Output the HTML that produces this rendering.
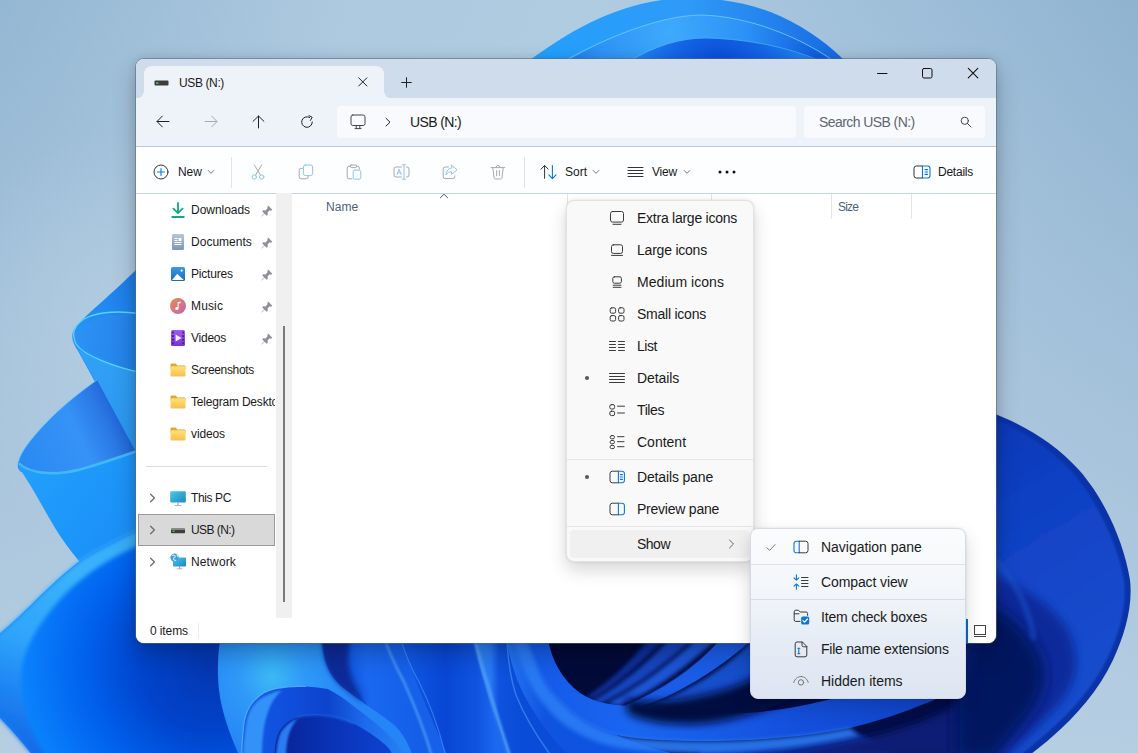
<!DOCTYPE html>
<html lang="en">
<head>
<meta charset="utf-8">
<title>USB (N:) - File Explorer</title>
<style>
*{box-sizing:border-box;margin:0;padding:0}
html,body{width:1138px;height:753px;overflow:hidden;background:#9fbfd8}
body{position:relative;font-family:"Liberation Sans","DejaVu Sans",sans-serif;font-size:12px;color:#1b1b1b}
#wall{position:absolute;left:0;top:0;width:1138px;height:753px;display:block}

.abs{position:absolute}
#shadow{position:absolute;left:136px;top:59px;width:860px;height:584px;border-radius:8px;box-shadow:0 10px 24px 0 rgba(0,0,0,.24),0 0 8px 1px rgba(0,0,0,.09)}
#win{position:absolute;left:136px;top:59px;width:860px;height:584px;border-radius:8px;overflow:hidden;background:#fff;outline:1px solid rgba(90,105,125,.55)}
#titlebar{position:absolute;left:0;top:0;width:860px;height:39px;background:#cfdcec}
#tab{position:absolute;left:8px;top:7px;width:240px;height:33px;background:#eef3f9;border-radius:8px 8px 0 0}
#tab:before,#tab:after{content:"";position:absolute;bottom:0;width:8px;height:8px}
#tab:before{left:-8px;background:radial-gradient(circle at 0 0,rgba(0,0,0,0) 7.5px,#eef3f9 8px)}
#tab:after{right:-8px;background:radial-gradient(circle at 100% 0,rgba(0,0,0,0) 7.5px,#eef3f9 8px)}
#addr{position:absolute;left:0;top:39px;width:860px;height:49px;background:#eef3f9;border-bottom:1px solid #b9c9de}
.box{position:absolute;top:8px;height:32px;background:#f8fafd;border-radius:4px}
#toolbar{position:absolute;left:0;top:88px;width:860px;height:47px;background:#fdfeff;border-bottom:1px solid #c7d3e4}
#main{position:absolute;left:0;top:135px;width:860px;height:424px;background:#fff}
#status{position:absolute;left:0;top:559px;width:860px;height:25px;background:#fff}
.t12{font-size:12px;line-height:16px;white-space:nowrap;color:#1a1a1a}
.t14{font-size:14px;line-height:18px;white-space:nowrap;color:#1a1a1a}
svg{display:block;overflow:visible}

#ui{position:absolute;left:0;top:0;width:1138px;height:753px}
#ui>*{position:absolute}
.ic{position:absolute}
.tx{position:absolute;white-space:nowrap;font-size:12px;line-height:16px;color:#1a1a1a}
.g{color:#5e6670}
.st{fill:none;stroke:#1f1f1f;stroke-width:1;stroke-linecap:round;stroke-linejoin:round}
.sg{fill:none;stroke:#a9a9a9;stroke-width:1;stroke-linecap:round;stroke-linejoin:round}
.sb{fill:none;stroke:#8fc4f0;stroke-width:1;stroke-linecap:round;stroke-linejoin:round}
.sB{fill:none;stroke:#0a78d4;stroke-width:1.1;stroke-linecap:round;stroke-linejoin:round}

.menu{position:absolute;border-radius:8px;border:1px solid #e2e2e2;background:#f9f9f9;box-shadow:0 8px 18px rgba(0,0,0,.16),0 0 3px rgba(0,0,0,.10)}
.mt{position:absolute;white-space:nowrap;font-size:14px;line-height:18px;color:#1a1a1a}
.sd{fill:none;stroke:#3a3a3a;stroke-width:1;stroke-linecap:round;stroke-linejoin:round}
</style>
</head>
<body>
<!--WALL-->
<svg id="wall" width="1138" height="753" viewBox="0 0 1138 753">
<defs>
<linearGradient id="bg" x1="0" y1="0" x2="1" y2="0">
<stop offset="0" stop-color="#94b7d3"/><stop offset=".3" stop-color="#adc9df"/><stop offset=".52" stop-color="#b0cce1"/><stop offset=".86" stop-color="#9abbd7"/><stop offset="1" stop-color="#8fb3d0"/>
</linearGradient>
<linearGradient id="bgv" x1="0" y1="0" x2="0" y2="1"><stop offset="0" stop-color="#b8cfe3" stop-opacity="0"/><stop offset=".45" stop-color="#b8cfe3" stop-opacity=".45"/><stop offset="1" stop-color="#b8cfe3" stop-opacity=".95"/></linearGradient>
<radialGradient id="bgl" cx="130" cy="330" r="200" gradientUnits="userSpaceOnUse"><stop offset="0" stop-color="#bad2e5" stop-opacity=".6"/><stop offset="1" stop-color="#bad2e5" stop-opacity="0"/></radialGradient>
<radialGradient id="bgbr" cx="1138" cy="753" r="330" gradientUnits="userSpaceOnUse"><stop offset="0" stop-color="#b9d1e4"/><stop offset="1" stop-color="#b9d1e4" stop-opacity="0"/></radialGradient>
<radialGradient id="bgbl" cx="0" cy="600" r="300" gradientUnits="userSpaceOnUse"><stop offset="0" stop-color="#bcd0e3"/><stop offset="1" stop-color="#bcd0e3" stop-opacity="0"/></radialGradient>
</defs>
<rect width="1138" height="753" fill="url(#bg)"/>
<rect width="1138" height="753" fill="url(#bgv)"/>
<rect width="1138" height="753" fill="url(#bgl)"/>

<defs>
<linearGradient id="tA" x1="529" y1="0" x2="844" y2="0" gradientUnits="userSpaceOnUse"><stop offset="0" stop-color="#23a0fd"/><stop offset=".5" stop-color="#2f9af7"/><stop offset=".75" stop-color="#2484ef"/><stop offset="1" stop-color="#1768e2"/></linearGradient>
<radialGradient id="tB" cx="670" cy="32" r="150" gradientUnits="userSpaceOnUse"><stop offset="0" stop-color="#3eaafc"/><stop offset=".5" stop-color="#2c92f6"/><stop offset="1" stop-color="#0f5ede"/></radialGradient>
<radialGradient id="tC" cx="720" cy="64" r="90" gradientUnits="userSpaceOnUse"><stop offset="0" stop-color="#0a4ed6"/><stop offset=".5" stop-color="#1466e6"/><stop offset="1" stop-color="#2088f4"/></radialGradient>
<filter id="b2"><feGaussianBlur stdDeviation="2"/></filter>
<filter id="b4"><feGaussianBlur stdDeviation="4"/></filter>
<filter id="b8"><feGaussianBlur stdDeviation="8"/></filter>
<filter id="b14"><feGaussianBlur stdDeviation="14"/></filter>
</defs>
<!-- top arch -->
<path d="M527,62 C560,38 600,12 650,2 C690,-6 740,-2 780,16 C810,30 830,46 846,62 Z" fill="url(#tA)"/>
<path d="M566,62 C610,36 660,16 700,15 C750,16 800,38 833,62 Z" fill="url(#tB)"/>
<path d="M566,60 C610,36 660,16 700,15 C750,16 800,38 831,59" fill="none" stroke="#6fcdf9" stroke-width="1" opacity=".8"/>
<path d="M629,62 C655,46 680,38 706,38 C750,39 790,48 820,62 Z" fill="url(#tC)"/>
<path d="M629,61 C655,46 680,38 706,38 C750,39 790,48 818,60" fill="none" stroke="#4fb0f5" stroke-width="1" opacity=".7"/>

<defs>
<linearGradient id="p1" x1="70" y1="330" x2="140" y2="300" gradientUnits="userSpaceOnUse"><stop offset="0" stop-color="#2796f7"/><stop offset="1" stop-color="#1c7ee8"/></linearGradient>
<linearGradient id="p1i" x1="75" y1="335" x2="140" y2="345" gradientUnits="userSpaceOnUse"><stop offset="0" stop-color="#2d92f5"/><stop offset="1" stop-color="#2280e8"/></linearGradient>
<linearGradient id="p1d" x1="80" y1="350" x2="140" y2="420" gradientUnits="userSpaceOnUse"><stop offset="0" stop-color="#31a2f6"/><stop offset="1" stop-color="#2c98f0"/></linearGradient>
<linearGradient id="p2i" x1="20" y1="460" x2="125" y2="410" gradientUnits="userSpaceOnUse"><stop offset="0" stop-color="#2a8af2"/><stop offset=".55" stop-color="#3692f6"/><stop offset=".8" stop-color="#2a78e4"/><stop offset="1" stop-color="#1a5cd0"/></linearGradient>
<linearGradient id="p2o" x1="20" y1="470" x2="140" y2="560" gradientUnits="userSpaceOnUse"><stop offset="0" stop-color="#22a0fd"/><stop offset=".5" stop-color="#1d96fa"/><stop offset="1" stop-color="#1a8cf6"/></linearGradient>
<linearGradient id="p3r" x1="20" y1="750" x2="110" y2="540" gradientUnits="userSpaceOnUse"><stop offset="0" stop-color="#1268e6"/><stop offset=".25" stop-color="#2088f4"/><stop offset=".45" stop-color="#2fa4fb"/><stop offset=".8" stop-color="#3bb2fb"/><stop offset="1" stop-color="#38aef8"/></linearGradient>
<radialGradient id="p3b" cx="210" cy="665" r="230" gradientUnits="userSpaceOnUse"><stop offset="0" stop-color="#0536b0"/><stop offset=".3" stop-color="#0044cc"/><stop offset=".55" stop-color="#0062ee"/><stop offset=".8" stop-color="#0a80fc"/><stop offset="1" stop-color="#1a90fc"/></radialGradient>
</defs>
<!-- base under window -->
<rect x="136" y="300" width="858" height="457" fill="url(#base)"/>
<!-- left petal 1 -->
<path d="M140,266 C118,288 92,310 77,325 C70,333 71,341 78,351 L95,382 L140,460 Z" fill="url(#p1)"/>
<path d="M74,333 C90,318 115,312 140,313 L140,373 C115,365 90,354 75,340 Z" fill="url(#p1i)"/>
<path d="M78,349 C95,360 118,368 140,373 L140,460 L96,382 Z" fill="url(#p1d)"/>
<path d="M140,313.500 C120,311 98,311 84,319 C74,326 71,333 76,344 C84,356 115,367 140,372.500" fill="none" stroke="#62d8fb" stroke-width="1.300" opacity=".9"/>
<!-- left petal 2 -->
<path d="M97,380 C80,392 60,408 45,424 C30,440 20,453 18,463 C17,468 19,470 21,472 L140,480 L136,452 Z" fill="url(#p2i)"/>
<path d="M18,464 C30,475 55,477 80,470 C100,465 120,458 140,450 L140,600 L100,580 C85,570 70,552 55,528 C42,506 30,483 19,468 Z" fill="url(#p2o)"/>
<path d="M18.500,463 C30,474 55,476 80,469.500 C100,464 120,457 140,450" fill="none" stroke="#45bcfb" stroke-width="2.400" opacity=".95"/>
<path d="M97,380 C80,392 60,408 45,424 C30,440 20,453 18.500,462" fill="none" stroke="#52c4f9" stroke-width="1" opacity=".8"/>
<!-- left petal 3 -->
<path d="M140,529 C115,541 92,552 77,563 C58,578 42,594 30,606 C15,620 5,630 -4,636 L-4,714 C10,728 22,742 34,757 L300,757 L300,600 L140,600 Z" fill="url(#p3b)"/>
<path d="M140,529 C115,541 92,552 77,563 C58,578 42,594 30,606 C15,620 5,630 -4,636 L-4,714 C10,728 22,742 34,757 L46,757 C30,730 20,700 21,675 C22,650 40,620 66,593 C90,570 115,555 140,545 Z" fill="url(#p3r)" filter="url(#b2)"/>

<defs>
<linearGradient id="base" x1="136" y1="0" x2="1000" y2="0" gradientUnits="userSpaceOnUse"><stop offset="0" stop-color="#0650dc"/><stop offset=".1" stop-color="#0644d0"/><stop offset=".3" stop-color="#1058e4"/><stop offset=".45" stop-color="#1460ea"/><stop offset=".6" stop-color="#0a2a9a"/><stop offset="1" stop-color="#071f80"/></linearGradient>
<radialGradient id="p4" cx="272" cy="676" r="80" gradientUnits="userSpaceOnUse"><stop offset="0" stop-color="#3cbaf5"/><stop offset=".4" stop-color="#2f9af8"/><stop offset="1" stop-color="#2585f6"/></radialGradient>
<linearGradient id="p4c" x1="250" y1="700" x2="405" y2="700" gradientUnits="userSpaceOnUse"><stop offset="0" stop-color="#1258e2"/><stop offset=".25" stop-color="#0f4edc"/><stop offset=".5" stop-color="#0c44cc"/><stop offset=".75" stop-color="#1c6cec"/><stop offset="1" stop-color="#2880f4"/></linearGradient>
<linearGradient id="p4d" x1="280" y1="700" x2="390" y2="700" gradientUnits="userSpaceOnUse"><stop offset="0" stop-color="#082498"/><stop offset=".5" stop-color="#0a34b8"/><stop offset="1" stop-color="#0c42d0"/></linearGradient>
<linearGradient id="rl" x1="996" y1="420" x2="1130" y2="640" gradientUnits="userSpaceOnUse"><stop offset="0" stop-color="#0c38b8"/><stop offset=".5" stop-color="#1244c8"/><stop offset="1" stop-color="#154ccc"/></linearGradient>
</defs>
<defs>
<linearGradient id="fA" x1="325" y1="0" x2="420" y2="0" gradientUnits="userSpaceOnUse"><stop offset="0" stop-color="#0c4cd8"/><stop offset=".45" stop-color="#1a68f0"/><stop offset="1" stop-color="#145ee8"/></linearGradient>
<linearGradient id="fB" x1="405" y1="0" x2="495" y2="0" gradientUnits="userSpaceOnUse"><stop offset="0" stop-color="#1058e4"/><stop offset=".45" stop-color="#0846d4"/><stop offset=".8" stop-color="#0f54e0"/><stop offset="1" stop-color="#1c68f0"/></linearGradient>
<filter id="b1"><feGaussianBlur stdDeviation="0.8"/></filter>
<linearGradient id="f1" x1="330" y1="0" x2="480" y2="0" gradientUnits="userSpaceOnUse"><stop offset="0" stop-color="#1d64e4"/><stop offset=".4" stop-color="#1558dc"/><stop offset=".75" stop-color="#0f4cd2"/><stop offset="1" stop-color="#2070ea"/></linearGradient>
<linearGradient id="f2" x1="478" y1="0" x2="520" y2="0" gradientUnits="userSpaceOnUse"><stop offset="0" stop-color="#2c82f6"/><stop offset=".3" stop-color="#2878f4"/><stop offset=".5" stop-color="#0e52de"/><stop offset="1" stop-color="#0a4cd8"/></linearGradient>
<linearGradient id="f3" x1="508" y1="0" x2="545" y2="0" gradientUnits="userSpaceOnUse"><stop offset="0" stop-color="#2474f2"/><stop offset="1" stop-color="#0f54e0"/></linearGradient>
<linearGradient id="f4" x1="540" y1="0" x2="1000" y2="0" gradientUnits="userSpaceOnUse"><stop offset="0" stop-color="#145ae8"/><stop offset=".2" stop-color="#1a66f0"/><stop offset=".55" stop-color="#1450dc"/><stop offset="1" stop-color="#0e3ec0"/></linearGradient>
<linearGradient id="st" x1="600" y1="700" x2="760" y2="640" gradientUnits="userSpaceOnUse"><stop offset="0" stop-color="#1a58d8"/><stop offset="1" stop-color="#1040b8"/></linearGradient>
</defs>
<!-- bottom: folds -->
<path d="M540,640 L1000,640 L1000,757 L600,757 Z" fill="#030d46"/>
<path d="M320,640 L392,640 C400,672 415,715 436,757 L405,757 Z" fill="url(#fA)"/>
<path d="M320,640 L345,640 C345,660 350,680 365,700 L340,690 Z" fill="#0a2c98" filter="url(#b4)" opacity=".8"/>
<path d="M399,640 L480,640 C488,680 498,720 512,757 L446,757 C432,722 412,682 399,640 Z" fill="url(#fB)"/>
<path d="M386,640 L402,640 C414,682 434,722 448,757 L431,757 C420,722 400,682 386,640 Z" fill="#1660ea"/>
<path d="M385,640 C392,660 398,670 404,682 C412,700 423,724 432,757" fill="none" stroke="#4a9af6" stroke-width="2.200" filter="url(#b1)"/>
<path d="M401,640 C406,656 412,670 419,682 C428,700 438,724 446,757" fill="none" stroke="#3a86f0" stroke-width="1.200" opacity=".8"/>
<path d="M474,640 L509,640 C512,665 520,690 536,715 C548,733 560,747 572,757 L508,757 C494,720 483,680 474,640 Z" fill="url(#f2)"/>
<path d="M475,640 C480,660 483,672 487,682 C492,700 499,724 510,757" fill="none" stroke="#4a98f6" stroke-width="3.500" filter="url(#b1)"/>
<path d="M507,640 L528,640 C534,665 545,685 560,700 C590,728 640,748 690,757 L571,757 C555,742 540,722 528,702 C517,683 510,662 507,640 Z" fill="url(#f3)"/>
<path d="M507,640 C508,660 511,680 516,695 C524,715 538,738 552,757" fill="none" stroke="#3a86f2" stroke-width="1.500" opacity=".8"/>
<path d="M546,640 L800,640 L760,700 C720,705 680,706 650,700 C625,706 600,706 580,692 C562,678 550,660 546,640 Z" fill="#020a38"/>
<!-- streaks -->
<path d="M648,640 L664,640 C640,665 612,688 592,699 L586,697 C610,682 632,660 648,640 Z" fill="#0c2f9a" filter="url(#b2)"/>
<path d="M668,640 L692,640 C664,666 628,692 600,704 L592,701 C622,684 648,662 668,640 Z" fill="#1444c0" filter="url(#b2)"/>
<path d="M695,640 L716,640 C688,666 650,694 620,706 L606,704 C640,686 670,664 695,640 Z" fill="#1a55d8" filter="url(#b2)"/>
<path d="M719,640 L752,640 C720,668 676,697 636,708 L622,706 C662,690 696,666 719,640 Z" fill="#1a5ce6"/>
<path d="M752,640 L870,640 C820,668 760,690 700,705 L640,708 C690,692 730,665 752,640 Z" fill="#184fcc" filter="url(#b2)"/>
<path d="M719,640 C696,666 662,690 622,706" fill="none" stroke="#071a6a" stroke-width="1.5" opacity=".8"/>
<!-- band under dark -->
<path d="M526,640 L548,640 C552,660 562,680 580,693 C598,705 622,707 650,706 C700,716 750,716 800,706 C860,694 930,672 985,640 L1000,640 L1000,665 C960,692 900,716 850,728 C800,738 740,742 690,741 C650,740 625,738 610,733 C590,726 575,716 565,706 C550,692 542,680 538,668 Z" fill="url(#f4)"/>
<path d="M625,698 C660,706 700,698 735,686 C752,679 765,672 778,665 L796,696 C765,712 730,722 700,724 C672,726 645,722 628,714 Z" fill="#020b40" filter="url(#b4)"/>
<path d="M700,748 C760,750 810,744 860,734 L900,757 L700,757 Z" fill="#0b32a6" filter="url(#b2)"/>
<!-- light band under f4 -->
<path d="M526,640 L538,668 C542,680 550,692 565,706 C575,716 590,726 610,733 C625,738 650,740 690,741 C740,742 800,738 850,728 L860,736 C800,750 740,754 690,753 C650,752 620,750 598,742 C575,734 558,722 545,706 C530,688 520,664 514,640 Z" fill="#2a7cf6" filter="url(#b2)" opacity=".9"/>
<path d="M700,757 C780,757 860,744 920,722 C950,710 980,692 1000,675 L1000,757 Z" fill="#071c74" filter="url(#b4)"/>
<!-- petal 4 -->
<path d="M220,640 L322,640 C323,655 326,672 340,685 C355,698 375,710 393,724 C402,732 408,742 413,757 L240,757 C232,740 222,715 219,690 C217,670 218,655 220,640 Z" fill="url(#p4)"/>
<path d="M322,640 L350,640 C345,660 345,680 365,704 L340,685 C326,672 323,655 322,640 Z" fill="#0a2a98" filter="url(#b2)"/>
<path d="M241.600,757 C242,740 243,730 244.500,720 C247,710 250,704 256,699 C262,693 268,690 277,688.400 C287,686.500 296,686 306,686.500 C314,687 321,688 327.600,689 C338,694 346,700 354.600,707 C365,715 375,722 383.600,730 C392,738 399,745 405,757 Z" fill="url(#p4c)"/>
<path d="M243,757 C244,740 245,730 247,720 C249,711 253,705 258,700.500 C264,696 272,692 282,690.500 C270,700 262,720 262,757 Z" fill="#3092f8" filter="url(#b1)"/>
<path d="M241.600,757 C242,740 243,730 244.500,720 C247,710 250,704 256,699 C262,693 268,690 277,688.400 C287,686.500 296,686 306,686.500" fill="none" stroke="#58b8f8" stroke-width="1.200" opacity=".8"/>
<path d="M274.400,757 C275,745 276,738 279,732 C283,725 289,720 296.600,717.400 C306,715 316,714.500 325.600,715.500 C336,717 346,720 354.600,724 C366,730 376,737 383.600,743.500 C388,747 391,750 393,757 Z" fill="url(#p4d)"/>
<path d="M276,757 C277,745 278,738 281,732 C285,726 291,721 298,718.500 C290,726 286,740 286,757 Z" fill="#2a7cf0" filter="url(#b1)"/>
<path d="M296.600,717.400 C306,715 316,714.500 325.600,715.500 C336,717 346,720 354.600,724" fill="none" stroke="#2a70e8" stroke-width="1.500" opacity=".7" filter="url(#b1)"/>
<!-- right lobe -->
<path d="M990,412 C1022,424 1054,442 1079,470 C1104,498 1124,542 1130,580 C1133,606 1125,634 1113,660 C1099,690 1076,716 1053,736 C1043,745 1035,751 1027,757 L990,757 Z" fill="#0b33a8"/>
<path d="M990,417 C1020,429 1050,447 1074,474 C1098,503 1118,545 1124,580 C1127,605 1120,632 1108,657 C1094,686 1072,711 1049,731 C1039,740 1028,749 1018,757 L990,757 Z" fill="url(#rl)" filter="url(#b1)"/>
<path d="M975,570 C1010,578 1050,600 1068,630 C1080,655 1078,680 1062,700 C1045,722 1020,742 1000,760 L960,760 L960,680 Z" fill="#0a2c9c" filter="url(#b4)"/>
<path d="M985,605 C1010,612 1032,635 1042,660 C1048,682 1040,704 1022,724 C1012,736 1002,748 994,760 L955,760 L955,690 Z" fill="#04145e" filter="url(#b8)"/>
<path d="M996,560 C1015,580 1030,610 1034,640" fill="none" stroke="#1d52cc" stroke-width="5" opacity=".6" filter="url(#b2)"/>

</svg>
<!--/WALL-->
<div id="shadow"></div>
<div id="win">
<div id="titlebar"><div id="tab"></div></div>
<div id="addr"><div class="box" style="left:201px;width:459px"></div><div class="box" style="left:668px;width:181px"></div></div>
<div id="toolbar"></div>
<div id="main"></div>
<div id="status"></div>
</div>


<div id="ui">
<!-- tab -->
<svg class="ic" style="left:154px;top:79px" width="15" height="8" viewBox="0 0 15 8"><rect x="0.5" y="1.5" width="14" height="5" rx="1" fill="#3c3c3c"/><rect x="2" y="3.5" width="2.5" height="1.2" fill="#5be36a"/></svg>
<div class="tx" style="left:179px;top:75px;letter-spacing:-0.38px">USB (N:)</div>
<svg class="ic" style="left:357px;top:76px" width="12" height="12" viewBox="0 0 12 12"><path class="st" d="M1.700,1.800 L9.900,10 M9.900,1.800 L1.700,10"/></svg>
<svg class="ic" style="left:400px;top:76px" width="13" height="13" viewBox="0 0 13 13"><path class="st" d="M6.500,1.700 V11.300 M1.700,6.500 H11.300"/></svg>
<!-- caption buttons -->
<svg class="ic" style="left:877px;top:67px" width="11" height="12" viewBox="0 0 11 12"><path class="st" style="stroke:#111" d="M0.500,6.500 H10"/></svg>
<svg class="ic" style="left:921px;top:67px" width="13" height="13" viewBox="0 0 13 13"><rect class="st" style="stroke:#111" x="1.500" y="1.500" width="9.500" height="9.500" rx="1.500"/></svg>
<svg class="ic" style="left:967px;top:67px" width="12" height="12" viewBox="0 0 12 12"><path class="st" style="stroke:#111;stroke-width:1.100" d="M1.300,1.300 L10.800,10.800 M10.800,1.300 L1.300,10.800"/></svg>
<!-- nav buttons -->
<svg class="ic" style="left:156px;top:115px" width="14" height="14" viewBox="0 0 14 14"><path class="st" d="M13,6.500 H1.200 M6.300,1.100 L1,6.500 L6.300,11.900"/></svg>
<svg class="ic" style="left:204px;top:115px" width="14" height="14" viewBox="0 0 14 14"><path class="sg" d="M1,6.500 H12.800 M7.700,1.100 L13,6.500 L7.700,11.900"/></svg>
<svg class="ic" style="left:252px;top:115px" width="14" height="14" viewBox="0 0 14 14"><path class="st" d="M6.500,13 V1.200 M1.100,6.300 L6.500,1 L11.900,6.300"/></svg>
<svg class="ic" style="left:300px;top:115px" width="14" height="14" viewBox="0 0 14 14"><path class="st" d="M12.3,7 A5.3,5.3 0 1 1 9.6,2.4 M9,0.6 L12.2,2.3 L10.4,5.4" /></svg>
<!-- address -->
<svg class="ic" style="left:350px;top:114px" width="16" height="16" viewBox="0 0 16 16"><rect class="st" x="1" y="1" width="14" height="10.5" rx="1.8" style="stroke:#444"/><path d="M5,14.6 H11 M6.2,12 V14.4 M9.8,12 V14.4" class="st" style="stroke:#444"/></svg>
<svg class="ic" style="left:384px;top:116px" width="8" height="12" viewBox="0 0 8 12"><path class="st" d="M2,2.300 L6,6.200 L2,10.100"/></svg>
<div class="tx" style="left:410px;top:113px;font-size:14px;line-height:18px;letter-spacing:-0.62px">USB (N:)</div>
<div class="tx g" style="left:819px;top:113px;font-size:14px;line-height:18px;letter-spacing:-0.58px">Search USB (N:)</div>
<svg class="ic" style="left:960px;top:116px" width="12" height="12" viewBox="0 0 12 12"><circle class="st" cx="4.8" cy="4.8" r="3.6" style="stroke:#444"/><path class="st" d="M7.5,7.5 L11,11" style="stroke:#444"/></svg>
<!-- toolbar -->
<svg class="ic" style="left:153px;top:164px" width="16" height="16" viewBox="0 0 16 16"><circle class="st" cx="8" cy="8" r="7" style="stroke:#333"/><path class="sB" d="M8,4.6 V11.4 M4.6,8 H11.4"/></svg>
<div class="tx" style="left:178px;top:164px;letter-spacing:-0.10px">New</div>
<svg class="ic" style="left:207px;top:169px" width="8" height="6" viewBox="0 0 8 6"><path class="st" style="stroke:#777" d="M1.2,1.5 L4,4.3 L6.8,1.5"/></svg>
<div style="left:231px;top:157px;width:1px;height:31px;background:#e3e3e3"></div>
<svg class="ic" style="left:250px;top:164px" width="16" height="16" viewBox="0 0 16 16"><path class="sg" d="M4.2,0.8 L10.6,11.4 M11.8,0.8 L5.4,11.4"/><circle class="sb" cx="4.3" cy="13" r="2.2"/><circle class="sb" cx="11.7" cy="13" r="2.2"/></svg>
<svg class="ic" style="left:298px;top:164px" width="16" height="16" viewBox="0 0 16 16"><path class="sg" d="M4.4,4.4 H3.2 A2,2 0 0 0 1.2,6.4 V12.8 A2,2 0 0 0 3.2,14.8 H8.2 A2,2 0 0 0 10.2,12.8 V12.2"/><rect class="sb" x="5.4" y="1" width="9.2" height="10.6" rx="2"/></svg>
<svg class="ic" style="left:346px;top:164px" width="16" height="16" viewBox="0 0 16 16"><path class="sg" d="M6,14.8 H3 A1.8,1.8 0 0 1 1.2,13 V4 A1.8,1.8 0 0 1 3,2.2 H4.6 M10.4,2.2 H11.6 A1.8,1.8 0 0 1 13.4,4 V5.2 M5.2,1 H9.8 A0.8,0.8 0 0 1 10.6,1.8 V2.6 A0.8,0.8 0 0 1 9.8,3.4 H5.2 A0.8,0.8 0 0 1 4.4,2.6 V1.8 A0.8,0.8 0 0 1 5.2,1 Z"/><rect class="sb" x="7.2" y="6.2" width="7.6" height="9" rx="1.6"/></svg>
<svg class="ic" style="left:393px;top:164px" width="17" height="16" viewBox="0 0 17 16"><path class="sg" d="M8.4,3 H3 A2,2 0 0 0 1,5 V11 A2,2 0 0 0 3,13 H8.4 M13.6,3 H14 A2,2 0 0 1 16,5 V11 A2,2 0 0 1 14,13 H13.6"/><path class="sb" d="M11,1 V15 M9.4,0.8 H12.6 M9.4,15.2 H12.6 M4,10.6 L6.1,5.2 L8.2,10.6 M4.8,8.8 H7.4"/></svg>
<svg class="ic" style="left:442px;top:164px" width="16" height="16" viewBox="0 0 16 16"><path class="sg" d="M6.4,3 H3.2 A2,2 0 0 0 1.2,5 V12.6 A2,2 0 0 0 3.2,14.6 H10.8 A2,2 0 0 0 12.8,12.6 V11.8"/><path class="sb" d="M9.6,1.2 L15,5.8 L9.6,10.4 V7.8 C7,7.8 5.2,8.8 4,10.8 C4.2,7 6.2,4.2 9.6,3.9 Z"/></svg>
<svg class="ic" style="left:490px;top:164px" width="16" height="16" viewBox="0 0 16 16"><path class="sg" d="M1.2,3.6 H14.8 M6,3.4 A2,2 0 0 1 10,3.4 M2.8,3.8 L4,13.6 A1.6,1.6 0 0 0 5.6,15 H10.4 A1.6,1.6 0 0 0 12,13.6 L13.2,3.8 M6.6,6.6 V11.8 M9.4,6.6 V11.8"/></svg>
<div style="left:524px;top:157px;width:1px;height:31px;background:#e3e3e3"></div>
<svg class="ic" style="left:540px;top:164px" width="18" height="16" viewBox="0 0 18 16"><path class="st" style="stroke:#333" d="M4.6,14.4 V1.6 M1,5.2 L4.6,1.4 L8.2,5.2"/><path class="sB" d="M12.4,1.6 V14.4 M8.8,10.8 L12.4,14.6 L16,10.8"/></svg>
<div class="tx" style="left:565px;top:164px;letter-spacing:0.00px">Sort</div>
<svg class="ic" style="left:592px;top:169px" width="8" height="6" viewBox="0 0 8 6"><path class="st" style="stroke:#777" d="M1.2,1.5 L4,4.3 L6.8,1.5"/></svg>
<svg class="ic" style="left:627px;top:164px" width="17" height="16" viewBox="0 0 17 16"><path class="st" style="stroke:#333" d="M1,3.5 H16 M1,6.5 H16 M1,9.5 H16 M1,12.5 H16"/></svg>
<div class="tx" style="left:652px;top:164px;letter-spacing:-0.20px">View</div>
<svg class="ic" style="left:683px;top:169px" width="8" height="6" viewBox="0 0 8 6"><path class="st" style="stroke:#777" d="M1.2,1.5 L4,4.3 L6.8,1.5"/></svg>
<svg class="ic" style="left:718px;top:170px" width="18" height="4" viewBox="0 0 18 4"><circle cx="2" cy="2" r="1.5" fill="#111"/><circle cx="9" cy="2" r="1.5" fill="#111"/><circle cx="16" cy="2" r="1.5" fill="#111"/></svg>
<svg class="ic" style="left:913px;top:165px" width="18" height="14" viewBox="0 0 18 14"><path class="st" style="stroke:#333" d="M9.5,1 H3.4 A2.4,2.4 0 0 0 1,3.4 V10.6 A2.4,2.4 0 0 0 3.4,13 H9.5"/><path class="sB" d="M9.5,1 H14.6 A2.4,2.4 0 0 1 17,3.4 V10.6 A2.4,2.4 0 0 1 14.6,13 H9.5 Z M12,4.6 H14.6 M12,7 H14.6 M12,9.4 H14.6"/></svg>
<div class="tx" style="left:938px;top:164px;letter-spacing:-0.24px">Details</div>

<svg width="0" height="0" style="position:absolute"><defs>
<linearGradient id="fold" x1="0" y1="0" x2="0" y2="1"><stop offset="0" stop-color="#ffe082"/><stop offset="1" stop-color="#f7c143"/></linearGradient>
<linearGradient id="docg" x1="0" y1="0" x2="0" y2="1"><stop offset="0" stop-color="#b4c6dc"/><stop offset="1" stop-color="#7c97ba"/></linearGradient>
<linearGradient id="picg" x1="0" y1="0" x2="0" y2="1"><stop offset="0" stop-color="#3a9be4"/><stop offset="1" stop-color="#1668be"/></linearGradient>
<linearGradient id="musg" x1="0" y1="0" x2="1" y2="1"><stop offset="0" stop-color="#ee8a50"/><stop offset="1" stop-color="#c163b0"/></linearGradient>
<linearGradient id="vidg" x1="0" y1="0" x2="0" y2="1"><stop offset="0" stop-color="#a35cf0"/><stop offset="1" stop-color="#7a34d4"/></linearGradient>
<linearGradient id="pcg" x1="0" y1="0" x2="1" y2="1"><stop offset="0" stop-color="#45cde6"/><stop offset="1" stop-color="#1c86c4"/></linearGradient>
</defs></svg>
<!-- main area -->
<div style="left:276px;top:193px;width:16px;height:425px;background:#f0f0f0"></div>
<div style="left:283px;top:326px;width:2px;height:276px;background:#7a7a7a"></div>
<div style="left:146px;top:466px;width:121px;height:1px;background:#dcdcdc"></div>
<div style="left:138px;top:514px;width:137px;height:32px;background:#d9d9d9;border:1px solid #9a9a9a"></div>
<div class="tx" style="left:191px;top:202px;letter-spacing:-0.04px">Downloads</div>
<svg class="ic" style="left:261px;top:205px" width="12" height="12" viewBox="0 0 12 12"><path d="M7.2,0.6 L11.4,4.8 L10.3,5.4 L8.4,5.6 L6.6,7.6 L6.7,10 L5.7,10.8 L3.6,8.7 L0.8,11.6 L0.4,11.2 L3.3,8.4 L1.2,6.3 L2,5.3 L4.4,5.4 L6.4,3.6 L6.6,1.7 Z" fill="#8b9096"/></svg>
<div class="tx" style="left:191px;top:234px;letter-spacing:0.02px">Documents</div>
<svg class="ic" style="left:261px;top:237px" width="12" height="12" viewBox="0 0 12 12"><path d="M7.2,0.6 L11.4,4.8 L10.3,5.4 L8.4,5.6 L6.6,7.6 L6.7,10 L5.7,10.8 L3.6,8.7 L0.8,11.6 L0.4,11.2 L3.3,8.4 L1.2,6.3 L2,5.3 L4.4,5.4 L6.4,3.6 L6.6,1.7 Z" fill="#8b9096"/></svg>
<div class="tx" style="left:191px;top:266px;letter-spacing:-0.21px">Pictures</div>
<svg class="ic" style="left:261px;top:269px" width="12" height="12" viewBox="0 0 12 12"><path d="M7.2,0.6 L11.4,4.8 L10.3,5.4 L8.4,5.6 L6.6,7.6 L6.7,10 L5.7,10.8 L3.6,8.7 L0.8,11.6 L0.4,11.2 L3.3,8.4 L1.2,6.3 L2,5.3 L4.4,5.4 L6.4,3.6 L6.6,1.7 Z" fill="#8b9096"/></svg>
<div class="tx" style="left:191px;top:298px;letter-spacing:0.14px">Music</div>
<svg class="ic" style="left:261px;top:301px" width="12" height="12" viewBox="0 0 12 12"><path d="M7.2,0.6 L11.4,4.8 L10.3,5.4 L8.4,5.6 L6.6,7.6 L6.7,10 L5.7,10.8 L3.6,8.7 L0.8,11.6 L0.4,11.2 L3.3,8.4 L1.2,6.3 L2,5.3 L4.4,5.4 L6.4,3.6 L6.6,1.7 Z" fill="#8b9096"/></svg>
<div class="tx" style="left:191px;top:330px;letter-spacing:-0.25px">Videos</div>
<svg class="ic" style="left:261px;top:333px" width="12" height="12" viewBox="0 0 12 12"><path d="M7.2,0.6 L11.4,4.8 L10.3,5.4 L8.4,5.6 L6.6,7.6 L6.7,10 L5.7,10.8 L3.6,8.7 L0.8,11.6 L0.4,11.2 L3.3,8.4 L1.2,6.3 L2,5.3 L4.4,5.4 L6.4,3.6 L6.6,1.7 Z" fill="#8b9096"/></svg>
<div class="tx" style="left:191px;top:362px;letter-spacing:-0.35px">Screenshots</div>
<div class="tx" style="left:191px;top:394px;width:84px;overflow:hidden;letter-spacing:-0.20px">Telegram Deskto</div>
<div class="tx" style="left:191px;top:426px;letter-spacing:-0.12px">videos</div>
<div class="tx" style="left:191px;top:490px;letter-spacing:-0.39px">This PC</div>
<svg class="ic" style="left:149px;top:493px" width="7" height="10" viewBox="0 0 7 10"><path class="st" style="stroke:#6e6e6e;stroke-width:1.3" d="M1.600,1.200 L5.400,5 L1.600,8.800"/></svg>
<div class="tx" style="left:191px;top:522px;letter-spacing:-0.56px">USB (N:)</div>
<svg class="ic" style="left:149px;top:525px" width="7" height="10" viewBox="0 0 7 10"><path class="st" style="stroke:#6e6e6e;stroke-width:1.3" d="M1.600,1.200 L5.400,5 L1.600,8.800"/></svg>
<div class="tx" style="left:191px;top:554px;letter-spacing:0.14px">Network</div>
<svg class="ic" style="left:149px;top:557px" width="7" height="10" viewBox="0 0 7 10"><path class="st" style="stroke:#6e6e6e;stroke-width:1.3" d="M1.600,1.200 L5.400,5 L1.600,8.800"/></svg>
<svg class="ic" style="left:170px;top:363px" width="16" height="14" viewBox="0 0 16 14"><path d="M0.5,1.8 A1.2,1.2 0 0 1 1.7,0.6 H5.6 L7.4,2.4 H14.3 A1.2,1.2 0 0 1 15.5,3.6 V6 H0.5 Z" fill="#e9a520"/><rect x="0.5" y="3.2" width="15" height="10.3" rx="1.2" fill="url(#fold)"/></svg>
<svg class="ic" style="left:170px;top:395px" width="16" height="14" viewBox="0 0 16 14"><path d="M0.5,1.8 A1.2,1.2 0 0 1 1.7,0.6 H5.6 L7.4,2.4 H14.3 A1.2,1.2 0 0 1 15.5,3.6 V6 H0.5 Z" fill="#e9a520"/><rect x="0.5" y="3.2" width="15" height="10.3" rx="1.2" fill="url(#fold)"/></svg>
<svg class="ic" style="left:170px;top:427px" width="16" height="14" viewBox="0 0 16 14"><path d="M0.5,1.8 A1.2,1.2 0 0 1 1.7,0.6 H5.6 L7.4,2.4 H14.3 A1.2,1.2 0 0 1 15.5,3.6 V6 H0.5 Z" fill="#e9a520"/><rect x="0.5" y="3.2" width="15" height="10.3" rx="1.2" fill="url(#fold)"/></svg>

<svg class="ic" style="left:171px;top:202px" width="14" height="16" viewBox="0 0 14 16"><path d="M7,1 V11 M2.4,6.6 L7,11.2 L11.6,6.6" fill="none" stroke="#14a87c" stroke-width="1.800" stroke-linecap="round" stroke-linejoin="round"/><path d="M1.200,15 H12.800" stroke="#14a87c" stroke-width="1.800" stroke-linecap="round"/></svg>
<svg class="ic" style="left:172px;top:234px" width="12" height="16" viewBox="0 0 12 16"><rect x="0" y="0" width="12" height="16" rx="1.2" fill="url(#docg)"/><path d="M2.500,4.500 H5.500 M2.500,6.500 H5.500 M2.500,8.500 H9.500 M2.500,10.500 H9.500" stroke="#fff" stroke-width="1"/><rect x="6.500" y="4" width="3" height="3" fill="#fff"/></svg>
<svg class="ic" style="left:171px;top:267px" width="14" height="14" viewBox="0 0 14 14"><rect x="0" y="0" width="14" height="14" rx="1.6" fill="url(#picg)"/><path d="M1,13 L6.2,6.8 L12.8,13 Z" fill="#fff"/><circle cx="10.6" cy="3.6" r="1.1" fill="#fff"/></svg>
<svg class="ic" style="left:170px;top:298px" width="16" height="16" viewBox="0 0 16 16"><circle cx="8" cy="8" r="8" fill="url(#musg)"/><path d="M7.6,4 L10.6,3.4 V5.2 L8.6,5.6 V10.6 A1.7,1.5 0 1 1 7.6,9.2 Z" fill="#fff"/></svg>
<svg class="ic" style="left:171px;top:330px" width="14" height="16" viewBox="0 0 14 16"><rect x="0" y="0" width="14" height="16" rx="1.6" fill="url(#vidg)"/><path d="M4.6,4.4 L10.6,8 L4.6,11.6 Z" fill="#f3eaff"/><g fill="#4a1d94"><rect x="1" y="1.6" width="1.8" height="1.8"/><rect x="1" y="5.2" width="1.8" height="1.8"/><rect x="1" y="8.8" width="1.8" height="1.8"/><rect x="1" y="12.4" width="1.8" height="1.8"/><rect x="11.2" y="1.6" width="1.8" height="1.8"/><rect x="11.2" y="5.2" width="1.8" height="1.8"/><rect x="11.2" y="8.8" width="1.8" height="1.8"/><rect x="11.2" y="12.4" width="1.8" height="1.8"/></g></svg>
<svg class="ic" style="left:170px;top:491px" width="16" height="16" viewBox="0 0 16 16"><rect x="0.2" y="0.2" width="15.6" height="11.4" rx="1" fill="url(#pcg)"/><path d="M7.4,11.6 H8.6 V14 H11.4 V14.8 H4.6 V14 H7.4 Z" fill="#9aa3ad"/></svg>
<svg class="ic" style="left:171px;top:528px" width="14" height="6" viewBox="0 0 14 6"><rect x="0" y="0.6" width="14" height="4.6" rx="0.8" fill="#3e3e3e"/><rect x="0" y="0.6" width="14" height="1.4" rx="0.7" fill="#8a8a8a"/><rect x="1.6" y="2.6" width="2" height="1.2" fill="#46e05a"/></svg>
<svg class="ic" style="left:170px;top:553px" width="17" height="17" viewBox="0 0 17 17"><rect x="3" y="4.4" width="13" height="9" rx="0.8" fill="url(#pcg)"/><path d="M9,13.4 H10.2 V15.4 H12.6 V16.2 H6.6 V15.4 H9 Z" fill="#9aa3ad"/><circle cx="4.6" cy="4.6" r="4.2" fill="#3f9fdc"/><path d="M2,2.6 C3.4,1.6 5.4,2.2 5.2,3.6 C5,4.8 3,4.6 3.4,6.2 C3.8,7.4 5.4,6.8 6,8 M6.6,1.4 C7.6,2.2 7.4,3.6 8.4,4" fill="none" stroke="#c9ecff" stroke-width="1.1"/></svg>
<!-- header -->
<div class="tx" style="left:326px;top:199px;color:#4b5f7c;letter-spacing:0.08px">Name</div>
<div class="tx" style="left:838px;top:199px;color:#4b5f7c;letter-spacing:-0.83px">Size</div>
<svg class="ic" style="left:439px;top:193px" width="10" height="6" viewBox="0 0 10 6"><path class="st" style="stroke:#555" d="M1.4,4.8 L5,1.2 L8.6,4.8"/></svg>
<div style="left:567px;top:194px;width:1px;height:25px;background:#e5e5e5"></div>
<div style="left:711px;top:194px;width:1px;height:25px;background:#e5e5e5"></div>
<div style="left:831px;top:194px;width:1px;height:25px;background:#e5e5e5"></div>
<div style="left:911px;top:194px;width:1px;height:25px;background:#e5e5e5"></div>
<!-- status -->
<div class="tx" style="left:150px;top:623px;letter-spacing:-0.10px">0 items</div>
<div style="left:198px;top:623px;width:1px;height:16px;background:#ececec"></div>
<div style="left:945px;top:619px;width:23px;height:24px;border:1px solid #0a6cd4;border-right-width:2px;background:#cfe6fa"></div>
<svg class="ic" style="left:973px;top:624px" width="14" height="14" viewBox="0 0 14 14"><rect x="1.500" y="1.500" width="11" height="9" fill="none" stroke="#444" stroke-width="1"/><path d="M1,12.500 H13" stroke="#444" stroke-width="1"/></svg>
</div>

<div id="menus" style="position:absolute;left:0;top:0;width:1138px;height:753px">
<div class="menu" style="left:566px;top:200px;width:188px;height:362px"></div>
<div style="position:absolute;left:567px;top:459px;width:186px;height:1px;background:#e6e6e6"></div>
<div style="position:absolute;left:567px;top:526px;width:186px;height:1px;background:#e6e6e6"></div>
<div style="position:absolute;left:570px;top:530px;width:179px;height:28px;border-radius:4px;background:#f0f0f0"></div>
<div class="mt" style="left:637px;top:209px;letter-spacing:-0.25px">Extra large icons</div>
<div class="mt" style="left:637px;top:241px;letter-spacing:-0.22px">Large icons</div>
<div class="mt" style="left:637px;top:273px;letter-spacing:0.05px">Medium icons</div>
<div class="mt" style="left:637px;top:305px;letter-spacing:-0.24px">Small icons</div>
<div class="mt" style="left:637px;top:337px;letter-spacing:-0.45px">List</div>
<div class="mt" style="left:637px;top:369px;letter-spacing:-0.11px">Details</div>
<div class="mt" style="left:637px;top:401px;letter-spacing:-0.40px">Tiles</div>
<div class="mt" style="left:637px;top:433px;letter-spacing:0.00px">Content</div>
<div class="mt" style="left:637px;top:468px;letter-spacing:-0.15px">Details pane</div>
<div class="mt" style="left:637px;top:500px;letter-spacing:-0.23px">Preview pane</div>
<div class="mt" style="left:637px;top:535px;letter-spacing:-0.50px">Show</div>

<svg class="ic" style="left:584px;top:375px" width="6" height="6" viewBox="0 0 6 6"><circle cx="3" cy="3" r="2.1" fill="#5a5a5a"/></svg>
<svg class="ic" style="left:584px;top:474px" width="6" height="6" viewBox="0 0 6 6"><circle cx="3" cy="3" r="2.1" fill="#5a5a5a"/></svg>
<svg class="ic" style="left:609px;top:210px" width="16" height="16" viewBox="0 0 16 16"><rect class="sd" x="1.5" y="1.5" width="13" height="10.6" rx="2"/><path class="sd" d="M4,14.3 H12"/></svg>
<svg class="ic" style="left:609px;top:242px" width="16" height="16" viewBox="0 0 16 16"><rect class="sd" x="2.5" y="2.8" width="11" height="8.6" rx="1.8"/><path class="sd" d="M2.5,13.4 H13.5"/></svg>
<svg class="ic" style="left:609px;top:274px" width="16" height="16" viewBox="0 0 16 16"><rect class="sd" x="3.8" y="2.8" width="8.6" height="6.4" rx="1.6"/><path class="sd" d="M4.2,11.2 H12 M4.2,13.3 H12"/></svg>
<svg class="ic" style="left:609px;top:306px" width="16" height="16" viewBox="0 0 16 16"><rect class="sd" x="1.2" y="1.8" width="5.4" height="5.4" rx="1.5"/><rect class="sd" x="9.6" y="1.8" width="5.4" height="5.4" rx="1.5"/><rect class="sd" x="1.2" y="9.6" width="5.4" height="5.4" rx="1.5"/><rect class="sd" x="9.6" y="9.6" width="5.4" height="5.4" rx="1.5"/></svg>
<svg class="ic" style="left:609px;top:338px" width="16" height="16" viewBox="0 0 16 16"><path class="sd" d="M0.5,3.5 H6.5 M0.5,6.5 H6.5 M0.5,9.5 H6.5 M0.5,12.5 H6.5 M9.5,3.5 H15.5 M9.5,6.5 H15.5 M9.5,9.5 H15.5 M9.5,12.5 H15.5"/></svg>
<svg class="ic" style="left:609px;top:370px" width="16" height="16" viewBox="0 0 16 16"><path class="sd" d="M0.5,3.5 H15.5 M0.5,6.5 H15.5 M0.5,9.5 H15.5 M0.5,12.5 H15.5"/></svg>
<svg class="ic" style="left:609px;top:402px" width="16" height="16" viewBox="0 0 16 16"><rect class="sd" x="0.8" y="2.6" width="4.8" height="4.4" rx="1.6"/><rect class="sd" x="0.8" y="9.2" width="4.8" height="4.4" rx="1.6"/><path class="sd" d="M8.5,4.2 H15.5 M8.5,11 H15.5"/></svg>
<svg class="ic" style="left:609px;top:434px" width="16" height="16" viewBox="0 0 16 16"><rect class="sd" x="1.2" y="1.6" width="4.2" height="3.2" rx="1.3"/><rect class="sd" x="1.2" y="6.5" width="4.2" height="3.2" rx="1.3"/><rect class="sd" x="1.2" y="11.4" width="4.2" height="3.2" rx="1.3"/><path class="sd" d="M8.5,2.7 H15 M8.5,7.7 H15 M8.5,12.7 H15"/></svg>
<svg class="ic" style="left:609px;top:470px" width="16" height="14" viewBox="0 0 16 14"><path class="sd" d="M9.4,1.2 H3.4 A2.4,2.4 0 0 0 1,3.6 V10.4 A2.4,2.4 0 0 0 3.4,12.8 H9.4"/><path class="sB" d="M9.4,1.2 H13 A2.4,2.4 0 0 1 15.4,3.6 V10.4 A2.4,2.4 0 0 1 13,12.8 H9.4 Z M11.4,4.6 H13.4 M11.4,7 H13.4 M11.4,9.4 H13.4"/></svg>
<svg class="ic" style="left:609px;top:502px" width="16" height="14" viewBox="0 0 16 14"><path class="sd" d="M9.4,1.2 H3.4 A2.4,2.4 0 0 0 1,3.6 V10.4 A2.4,2.4 0 0 0 3.4,12.8 H9.4"/><path class="sB" d="M9.4,1.2 H13 A2.4,2.4 0 0 1 15.4,3.6 V10.4 A2.4,2.4 0 0 1 13,12.8 H9.4 Z"/></svg>
<svg class="ic" style="left:728px;top:539px" width="7" height="10" viewBox="0 0 7 10"><path class="sd" style="stroke:#666" d="M1.5,1 L5.5,5 L1.5,9"/></svg>
<!-- submenu -->
<div class="menu" style="left:750px;top:528px;width:216px;height:171px;background:linear-gradient(180deg,#fbfcfd 0%,#f3f6fa 35%,#e4ebf5 70%,#dde5f1 100%);border-color:#d5dbe4"></div>
<div style="position:absolute;left:751px;top:564px;width:214px;height:1px;background:#dfe3e8"></div>
<div style="position:absolute;left:751px;top:599px;width:214px;height:1px;background:#d8dde5"></div>
<div class="mt" style="left:821px;top:538px;letter-spacing:-0.03px">Navigation pane</div>
<div class="mt" style="left:821px;top:573px;letter-spacing:-0.11px">Compact view</div>
<div class="mt" style="left:821px;top:608px;letter-spacing:-0.18px">Item check boxes</div>
<div class="mt" style="left:821px;top:640px;letter-spacing:-0.23px">File name extensions</div>
<div class="mt" style="left:821px;top:672px;letter-spacing:-0.01px">Hidden items</div>

<svg class="ic" style="left:766px;top:543px" width="10" height="9" viewBox="0 0 10 9"><path class="sd" style="stroke:#777" d="M1,4.8 L3.6,7.4 L9,1.6"/></svg>
<svg class="ic" style="left:793px;top:540px" width="16" height="14" viewBox="0 0 16 14"><path class="sB" d="M6.2,1.2 H3.4 A2.4,2.4 0 0 0 1,3.6 V10.4 A2.4,2.4 0 0 0 3.4,12.8 H6.2 Z"/><path class="sd" d="M6.2,1.2 H12.6 A2.4,2.4 0 0 1 15,3.6 V10.4 A2.4,2.4 0 0 1 12.6,12.8 H6.2"/></svg>
<svg class="ic" style="left:793px;top:574px" width="16" height="16" viewBox="0 0 16 16"><path class="sB" d="M3.4,0.8 V6 M1,3.8 L3.4,6.2 L5.8,3.8 M3.4,15.2 V10 M1,12.2 L3.4,9.8 L5.8,12.2"/><path class="sd" d="M8.5,3.5 H15 M8.5,6.5 H15 M8.5,9.5 H15 M8.5,12.5 H15"/></svg>
<svg class="ic" style="left:793px;top:609px" width="17" height="17" viewBox="0 0 17 17"><path class="sd" d="M7,12.4 H2.8 A1.6,1.6 0 0 1 1.2,10.8 V2.8 A1.6,1.6 0 0 1 2.8,1.2 H5.4 L7.2,3 H13 A1.6,1.6 0 0 1 14.6,4.6 V6.4 M1.2,4.8 H6"/><rect x="8.2" y="7.6" width="8" height="8" rx="1.6" fill="#0a78d4"/><path d="M10,11.6 L11.6,13.2 L14.4,10" fill="none" stroke="#fff" stroke-width="1.2" stroke-linecap="round" stroke-linejoin="round"/></svg>
<svg class="ic" style="left:794px;top:641px" width="14" height="17" viewBox="0 0 14 17"><path class="sd" d="M8,1 H3 A1.8,1.8 0 0 0 1.2,2.8 V14 A1.8,1.8 0 0 0 3,15.8 H11 A1.8,1.8 0 0 0 12.800,14 V5.800 Z M8,1 V4.200 A1.600,1.600 0 0 0 9.600,5.800 H12.800"/><path class="sB" d="M4.800,7.400 V12.600 M3.800,7.200 H5.800 M3.800,12.800 H5.800"/></svg>
<svg class="ic" style="left:793px;top:675px" width="16" height="12" viewBox="0 0 16 12"><path class="sd" style="stroke:#777" d="M0.800,7.400 C1.800,3.800 4.600,1.600 8,1.600 C11.400,1.600 14.200,3.800 15.200,7.400"/><circle class="sd" style="stroke:#777" cx="8" cy="7.400" r="2.700"/></svg>
</div>
</body>
</html>
